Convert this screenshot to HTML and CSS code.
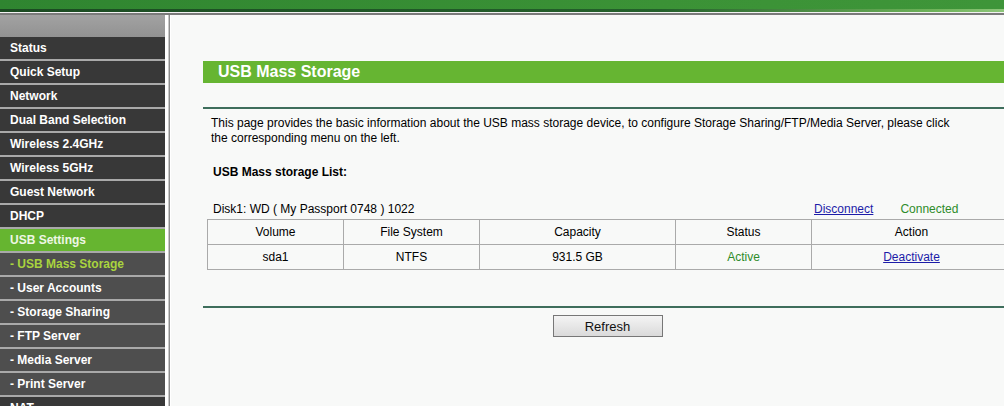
FILE: index.html
```html
<!DOCTYPE html>
<html>
<head>
<meta charset="utf-8">
<title>USB Mass Storage</title>
<link rel="stylesheet" href="styles.css">
</head>
<body>
<div class="topbar"><div class="topbar-green"></div><div class="topbar-strip"></div><div class="topbar-gap"></div><div class="topbar-gray"></div></div>
<div class="layout">
  <nav class="sidebar">
    <div class="side-top"></div>
    <div class="item">Status</div>
    <div class="item">Quick Setup</div>
    <div class="item">Network</div>
    <div class="item">Dual Band Selection</div>
    <div class="item">Wireless 2.4GHz</div>
    <div class="item">Wireless 5GHz</div>
    <div class="item">Guest Network</div>
    <div class="item">DHCP</div>
    <div class="item item-active">USB Settings</div>
    <div class="item sub sub-active">- USB Mass Storage</div>
    <div class="item sub">- User Accounts</div>
    <div class="item sub">- Storage Sharing</div>
    <div class="item sub">- FTP Server</div>
    <div class="item sub">- Media Server</div>
    <div class="item sub">- Print Server</div>
    <div class="item">NAT</div>
  </nav>
  <div class="divider"></div>
  <main class="content">
    <div class="inner">
      <div class="title-bar">USB Mass Storage</div>
      <div class="rule"></div>
      <p class="intro">This page provides the basic information about the USB mass storage device, to configure Storage Sharing/FTP/Media Server, please click the corresponding menu on the left.</p>
      <div class="list-title">USB Mass storage List:</div>
      <div class="disk">
        <div class="disk-name">Disk1: WD ( My Passport 0748 ) 1022</div>
        <div class="disk-actions"><a href="#" class="link">Disconnect</a><span class="green connected">Connected</span></div>
      </div>
      <table class="vol">
        <colgroup><col class="c1"><col class="c2"><col class="c3"><col class="c4"><col class="c5"></colgroup>
        <tr><td>Volume</td><td>File System</td><td>Capacity</td><td>Status</td><td>Action</td></tr>
        <tr><td>sda1</td><td>NTFS</td><td>931.5 GB</td><td class="green">Active</td><td><a href="#" class="link">Deactivate</a></td></tr>
      </table>
      <div class="rule rule-bottom"></div>
      <div class="btn-row"><button class="btn">Refresh</button></div>
    </div>
  </main>
</div>
</body>
</html>
```
FILE: styles.css
```css
html, body {
  margin: 0;
  padding: 0;
  overflow: hidden;
  background: #ffffff;
  font-family: "Liberation Sans", Arial, sans-serif;
  font-size: 12px;
  color: #000;
}
.topbar { width: 1100px; }
.topbar-green {
  height: 9px;
  background: linear-gradient(to right, #2f8530, #3b9236 60%, #3f963a);
}
.topbar-strip {
  height: 3px;
  background: linear-gradient(to right, #1b4a22 0%, #24602b 60%, #6fb35a 85%, #b8e0a6 100%);
}
.topbar-gap { height: 1px; background: #f2f2f2; }
.topbar-gray { height: 2px; background: #7a7a7a; }

.layout {
  display: flex;
  width: 1100px;
  height: 400px;
}
.sidebar {
  width: 165px;
  flex: none;
  background: #ffffff;
}
.side-top {
  height: 22px;
  background: linear-gradient(to bottom, #a2a2a2, #929292);
}
.item {
  height: 22px;
  line-height: 22px;
  border-bottom: 2px solid #a9a9a9;
  background: #383838;
  color: #ffffff;
  font-weight: bold;
  padding-left: 10px;
}
.item-active {
  background: #66b530;
  color: #eef7e4;
}
.sub {
  background: #4e4e4e;
}
.sub-active {
  color: #a9d43e;
}
.divider {
  flex: none;
  width: 2px;
  margin-left: 3px;
  margin-right: 1px;
  background: #8c8c8c;
  border-left: 1px solid #c8c8c8;
  box-sizing: border-box;
}
.content {
  flex: none;
  width: 900px;
  background: #f8f9f8;
  padding-left: 32px;
}
.inner {
  width: 809px;
}
.title-bar {
  margin-top: 46px;
  height: 22px;
  line-height: 22px;
  background: #66b532;
  color: #ffffff;
  font-weight: bold;
  font-size: 16px;
  padding-left: 15px;
}
.rule {
  margin-top: 24px;
  height: 2px;
  background: #3e6e5c;
}
.intro {
  margin: 7px 0 0 8px;
  width: 745px;
  line-height: 15px;
}
.list-title {
  margin: 19px 0 0 10px;
  font-weight: bold;
  line-height: 15px;
}
.disk {
  margin: 22px 0 0 4px;
  display: grid;
  grid-template-columns: 604px 200px;
  line-height: 15px;
  height: 17px;
}
.disk-name { padding-left: 6px; }
.disk-actions { padding-left: 3px; }
.connected { margin-left: 27px; }
.link { color: #1c1ca8; text-decoration: underline; }
.green { color: #2e8c2a; }
.vol {
  margin-left: 4px;
  border-collapse: collapse;
  width: 804px;
  table-layout: fixed;
}
.vol td {
  border: 1px solid #aaaaaa;
  height: 24px;
  padding: 0;
  text-align: center;
  vertical-align: middle;
}
.c1 { width: 136px; }
.c2 { width: 136px; }
.c3 { width: 196px; }
.c4 { width: 136px; }
.c5 { width: 200px; }
.rule-bottom { margin-top: 36px; }
.btn-row {
  display: flex;
  justify-content: center;
  margin-top: 7px;
}
.btn {
  width: 110px;
  height: 22px;
  font-family: "Liberation Sans", Arial, sans-serif;
  font-size: 13px;
  color: #111;
  background: linear-gradient(to bottom, #f4f4f4, #dadada);
  border: 1px solid #777777;
  border-radius: 0;
  padding: 0;
}
```
